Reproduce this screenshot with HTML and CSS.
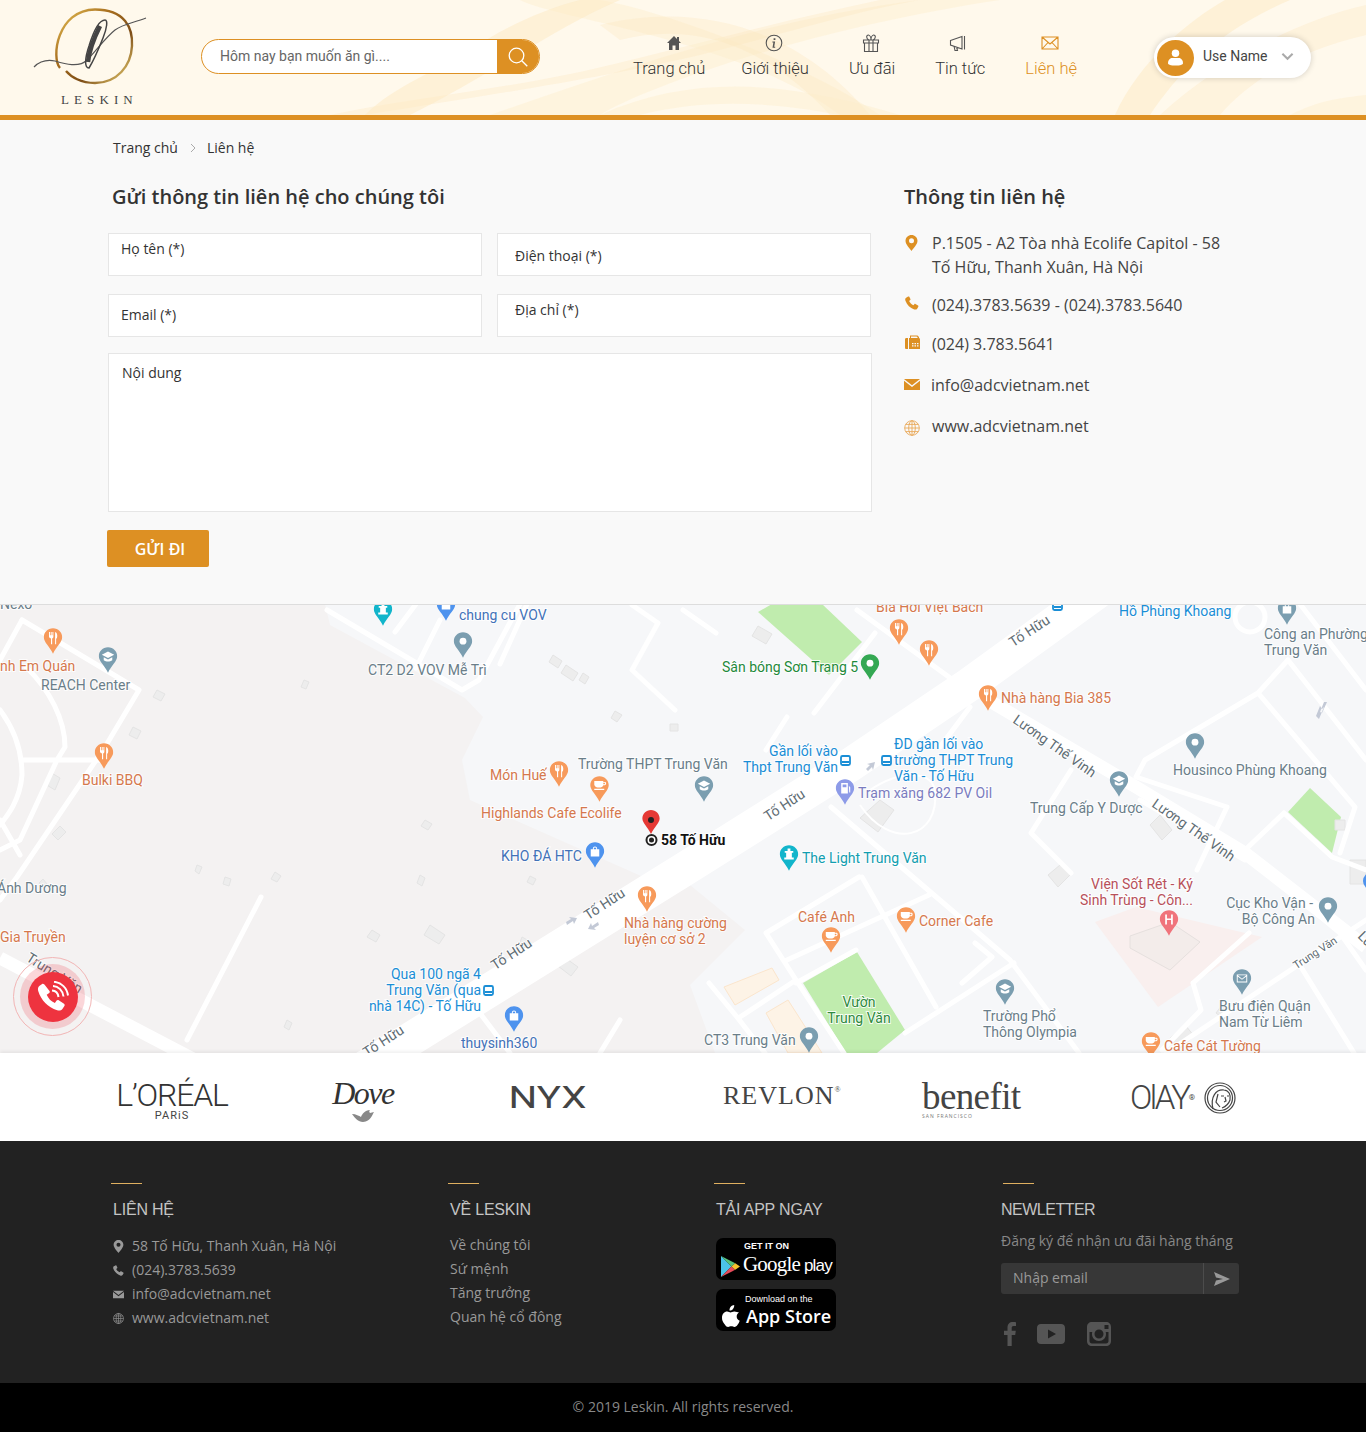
FILE: index.html
```html
<!DOCTYPE html>
<html lang="vi">
<head>
<meta charset="utf-8">
<title>Leskin - Liên hệ</title>
<link rel="stylesheet" href="styles.css">
</head>
<body>
<svg class="sprite" aria-hidden="true">
  <defs>
    <linearGradient id="gold" x1="0" y1="0" x2="1" y2="1">
      <stop offset="0" stop-color="#e9c65a"/><stop offset=".35" stop-color="#a9701f"/><stop offset=".65" stop-color="#7d4d16"/><stop offset="1" stop-color="#f0d878"/>
    </linearGradient>
    <symbol id="i-pin" viewBox="0 0 12 16"><path d="M6 0C2.7 0 0 2.6 0 5.8 0 9.6 4.6 14 6 16c1.400-2 6-6.400 6-10.200C12 2.600 9.300 0 6 0zm0 8.300A2.500 2.500 0 1 1 6 3.300a2.500 2.500 0 0 1 0 5z"/></symbol>
    <symbol id="i-phone" viewBox="0 0 16 16"><path d="M3.600.6 1.300 1.900C.2 2.600 0 4 .5 5.300c1.900 4.900 5.300 8.300 10 10 1.300.5 2.700.3 3.400-.8l1.300-2.300c.3-.5.2-1-.3-1.300l-3-1.800c-.4-.2-.9-.2-1.200.2l-1.100 1.300c-2.200-.9-3.900-2.700-4.900-4.900l1.300-1.100c.4-.3.4-.8.200-1.200L4.900.9C4.600.400 4.100.3 3.600.6z"/></symbol>
    <symbol id="i-mail" viewBox="0 0 16 11"><path d="M0 0h16L8 6.200zM0 1.800v9.200h16V1.800L8 8z"/></symbol>
    <symbol id="i-globe" viewBox="0 0 16 16"><g fill="none" stroke="currentColor" stroke-width=".9"><circle cx="8" cy="8" r="7.300"/><ellipse cx="8" cy="8" rx="3.300" ry="7.300"/><path d="M8 .7v14.600M.7 8h14.600M1.700 4.400h12.600M1.700 11.600h12.600"/></g></symbol>
    <symbol id="p" viewBox="0 0 20 27"><path d="M10 0C4.500 0 .3 4.300.3 9.600c0 5.200 6 9.400 9.700 17.400 3.700-8 9.700-12.200 9.700-17.400C19.700 4.300 15.500 0 10 0z"/></symbol>
    <symbol id="m-rest" viewBox="0 0 20 27"><path fill="#fff" d="M5.800 4h1v3.500h.8V4h1v3.500h.8V4h1v5c0 1-.6 1.500-1.300 1.800V17H7.900v-6.200C7.100 10.500 5.800 10 5.800 9zM12.200 4c1.500.3 2.300 2 2.300 4s-.6 3-1.200 3.200V17h-1.100z"/></symbol>
    <symbol id="m-cafe" viewBox="0 0 20 27"><path fill="#fff" d="M4.500 5h9.500v1h1.800c.8 0 1.200.7 1.200 1.500S16.600 9.500 15.500 9.500H14C13.600 11 12 12 9.500 12S5 11 4.500 9zM14 7v1.500h1.300c.3 0 .5-.3.500-.7s-.2-.8-.5-.8zM4.500 13.200h10.500v1.300H4.500z"/></symbol>
    <symbol id="m-school" viewBox="0 0 20 27"><path fill="#fff" d="M10 4.500 3.500 8 10 11.500 16.500 8zM5.500 10.500v3.300c1.200 1 2.900 1.400 4.500 1.400s3.300-.4 4.500-1.400v-3.300L10 13z"/></symbol>
    <symbol id="m-dot" viewBox="0 0 20 27"><circle cx="10" cy="9.500" r="3.600" fill="#fff"/></symbol>
    <symbol id="m-bag" viewBox="0 0 20 27"><path fill="#fff" d="M5.500 7.500h9v7.500h-9zM7.700 7.500V6.800a2.300 2.300 0 0 1 4.600 0v.7h-1V6.800a1.300 1.300 0 0 0-2.600 0v.7z"/></symbol>
    <symbol id="m-h" viewBox="0 0 20 27"><path fill="#fff" d="M6 4.500h1.800v4.200h4.400V4.500H14V15h-1.800v-4.600H7.800V15H6z"/></symbol>
    <symbol id="m-mail" viewBox="0 0 20 27"><path fill="#fff" d="M4.500 5.500h11v8.500h-11zm1 1L10 10l4.500-3.500zm0 1.200v5.300h9V7.700L10 11.200z"/></symbol>
    <symbol id="m-teal" viewBox="0 0 20 27"><path fill="#fff" d="M8.500 3.500h3v2.500h3v2h-1.500v5H15v2H5v-2h2V8H5.500V6h3zM9 9h2v2H9z"/></symbol>
    <symbol id="m-fuel" viewBox="0 0 20 27"><path fill="#fff" d="M6 4h7v11H6zm1.500 1.500v3h4v-3zM14 7l1.500 1.500V14h-1z"/></symbol>
  </defs>
</svg>

<header class="site-header">
  <svg class="swoosh" viewBox="0 0 1366 115" preserveAspectRatio="none" aria-hidden="true">
    <path class="sw1" d="M490 115C620 70 760 20 920 0L1000 0C800 30 640 90 600 115z"/>
    <path class="sw2" d="M365 115C520 90 600 78 700 55 780 35 860 10 920 0H880C760 25 640 60 560 76 480 92 400 100 330 115z"/>
    <path class="sw1" d="M520 0C560 20 740 40 840 115H880C800 60 660 10 600 0z"/>
    <path class="sw2" d="M620 40C700 20 770 50 830 115H870C800 30 700 0 600 25z"/>
    <path class="sw1" d="M600 115C700 70 800 85 900 115H840C760 100 700 100 640 115z"/>
    <path class="sw3" d="M1115 115C1140 60 1190 20 1225 0H1290C1220 30 1180 70 1150 115z"/>
    <path class="sw2" d="M1160 115C1220 60 1300 20 1366 5V35C1300 50 1250 80 1220 115z"/>
    <path class="sw1" d="M1290 115C1320 100 1340 98 1366 95V115z"/>
    <path class="sw3" d="M365 115C395 85 440 70 470 50 500 30 540 10 580 0H620C560 25 490 75 410 115z"/>
  </svg>
  <div class="brand-logo">
    <svg class="logo-art" viewBox="0 0 124 82" aria-hidden="true">
      <path class="logo-ring" d="M27 60C18 50 24 2 62 1.500 92 1.500 100 20 99 38 98 58 84 75 62 75 48 75 38 69 33 63"/>
      <path class="logo-flourish" d="M1 59C6 54 12 51 22 53 32 56 46 60 54 52 63 43 72 30 82 22 90 16 100 15 113 10"/>
      <path class="logo-l" d="M56 60C51 60 52 50 56 38 60 25 66 12 72 12 75 12 74 20 70 30 66 40 61 52 56 60z"/>
      <path class="logo-l-in" d="M55 54C56 44 61 30 67 18"/>
    </svg>
    <span class="logo-name">LESKIN</span>
  </div>
  <form class="search">
    <input class="search-input" type="text" placeholder="Hôm nay bạn muốn ăn gì....">
    <button class="search-btn" type="button" aria-label="Tìm">
      <svg class="search-icon" viewBox="0 0 20 20"><circle cx="8.500" cy="8.500" r="7.300"/><path d="M13.800 13.800 19.300 19.300"/></svg>
    </button>
  </form>
  <nav class="nav">
    <a class="nav-item">
      <svg class="nav-icon ni-home" viewBox="0 0 16 16"><path class="solid" d="M8 1 1 8h2v7h3.500v-4.500h3V15H13V8h2l-2-2V2h-2v2z"/></svg>
      <span>Trang chủ</span>
    </a>
    <a class="nav-item">
      <svg class="nav-icon ni-info" viewBox="0 0 18 18"><circle class="line" cx="9" cy="9" r="7.800"/><path class="solid" d="M8.600 4.200h1.800v1.700H8.600zM7.400 7.500h2.700L9.200 12.800h1v1H7.500l.9-5.300h-1z"/></svg>
      <span>Giới thiệu</span>
    </a>
    <a class="nav-item">
      <svg class="nav-icon ni-info" viewBox="0 0 18 18"><path class="line" d="M1.500 6h15v3h-15zM2.500 9h13v8.500h-13zM7 6v11.500M11 6v11.500M7 6C4 5 4 .8 6.500 1 8 1.200 9 4 9 6c0-2 1-4.800 2.500-5C14 .8 14 5 11 6"/></svg>
      <span>Ưu đãi</span>
    </a>
    <a class="nav-item">
      <svg class="nav-icon ni-mega" viewBox="0 0 18 18"><path class="line" d="M1.500 6.500 13 2.500v12.500L1.500 11zM15.500 2v13.500M5 12l1 4.500h2.500L7.500 13"/></svg>
      <span>Tin tức</span>
    </a>
    <a class="nav-item nav-active">
      <svg class="nav-icon ni-mail" viewBox="0 0 18 18"><path class="line" d="M1 3h16v12H1zM1 3l8 7 8-7M1 15l6-6.500M17 15l-6-6.500"/></svg>
      <span>Liên hệ</span>
    </a>
  </nav>
  <div class="user-pill">
    <span class="avatar">
      <svg class="avatar-icon" viewBox="0 0 16 18"><circle cx="8" cy="4.500" r="4"/><path d="M0 15c0-4 3-5.500 4-5.500h8c1 0 4 1.500 4 5.500 0 1.500-3 2.500-8 2.500S0 16.500 0 15z"/></svg>
    </span>
    <span class="user-name">Use Name</span>
    <svg class="chev" viewBox="0 0 14 9"><path d="M1.500 1.500 7 7l5.500-5.500"/></svg>
  </div>
</header>

<main class="main">
  <div class="crumbs"><a>Trang chủ</a><svg class="crumb-sep" viewBox="0 0 6 10"><path d="M1 1l4 4-4 4"/></svg><a>Liên hệ</a></div>
  <div class="contact-grid">
    <section class="form-col">
      <h2 class="title form-title">Gửi thông tin liên hệ cho chúng tôi</h2>
      <form class="form">
        <input class="field f-up" type="text" placeholder="Họ tên (*)">
        <input class="field f-down" type="text" placeholder="Điện thoại (*)">
        <input class="field" type="text" placeholder="Email (*)">
        <input class="field f-up f-wide" type="text" placeholder="Địa chỉ (*)">
        <textarea class="area" placeholder="Nội dung"></textarea>
      </form>
      <button class="send" type="button">GỬI ĐI</button>
    </section>
    <section class="info-col">
      <h2 class="title">Thông tin liên hệ</h2>
      <ul class="info">
        <li class="info-row r-addr"><svg class="info-ic ic-pin"><use href="#i-pin"/></svg><span>P.1505 - A2 Tòa nhà Ecolife Capitol - 58 Tố Hữu, Thanh Xuân, Hà Nội</span></li>
        <li class="info-row r-tel"><svg class="info-ic ic-phone"><use href="#i-phone"/></svg><span>(024).3783.5639 - (024).3783.5640</span></li>
        <li class="info-row r-fax"><svg class="info-ic ic-fax" viewBox="0 0 15 15"><path d="M0 4.500C0 3.500.5 3 1.500 3H3v11H1.500C.5 14 0 13.500 0 12.500zM4 3h1V.5h7.500L14 2v1h-.3C14.500 3 15 3.500 15 4.500V14H4zm2 0h6.500V2l-1-.5H6zm1 5v1.200h1.500V8zm2.500 0v1.200H11V8zM12 8v1.200h1.500V8zM7 10.300v1.200h1.500v-1.200zm2.500 0v1.200H11v-1.200zm2.500 0v1.200h1.500v-1.200z"/></svg><span>(024) 3.783.5641</span></li>
        <li class="info-row r-mail"><svg class="info-ic ic-mail"><use href="#i-mail"/></svg><span>info@adcvietnam.net</span></li>
        <li class="info-row r-web"><svg class="info-ic ic-globe"><use href="#i-globe"/></svg><span>www.adcvietnam.net</span></li>
      </ul>
    </section>
  </div>
</main>

<section class="map">
  <svg class="map-svg" viewBox="0 605 1366 448" aria-label="Bản đồ">
    <rect class="m-bg" x="0" y="604" width="1366" height="449"/>
    <path class="m-grey" d="M0 604H325L330 625 465 698 483 717 462 760 470 800 650 880 370 1053H0z"/>
    <path class="m-grey" d="M405 1053 690 885 745 930 690 985 715 1053z"/>
    <path class="m-green" d="M758 612 772 604H822L862 642 829 675z"/>
    <path class="m-green" d="M857 952 905 1030 877 1053H846L803 983z"/>
    <path class="m-green" d="M1310 788 1341 817 1332 853 1288 812z"/>
    <path class="m-pink" d="M1136 907 1262 937 1158 1007 1095 922z"/>
    <path class="m-tan" d="M724 987 772 968 779 980 735 1005z"/>
    <path class="m-tan" d="M766 1013 788 1000 822 1053H788z"/>
    <g class="m-block">
      <path d="M758 626l14 8-6 10-14-8zM553 655l9 6-4 7-9-6zM566 665l12 8-5 8-12-8zM583 673l6 4-4 7-6-4zM615 711l7 4-5 7-6-4zM670 724h8v7h-8zM304 680l5 2-3 7-5-2zM157 690l8 4-4 7-8-4zM133 727l8 4-4 8-8-4zM60 778l-5 12-10-6 5-12zM60 826l6 6-8 8-6-6zM425 820l7 4-4 6-7-4zM420 875l5 3-3 8-5-3zM275 872l6 4-4 6-6-3zM197 865l5 2-3 7-4-3zM225 877l6 2-2 7-6-2zM372 930l8 5-4 7-9-5zM430 925l15 10-6 9-15-9zM522 937l9 5-3 7-9-4zM564 957l14 10-7 9-13-10zM530 876l6 3-3 6-6-3zM287 1020l5 3-3 7-5-3zM43 879l4 5-4 4-4-5zM1160 815l12 15-10 10-12-15zM1335 820h10v10h-10zM1222 1005l8 6-6 8-8-6zM1350 860h16v24h-16zM880 800l14 10-16 22-18-14zM1060 865l10 10-12 12-10-12zM1170 1038l16-12 8 10-16 14z"/>
    </g>
    <path class="m-bld" d="M1130 936l40-14 30 20-30 28-40-22z"/>
    <g class="m-road">
      <path d="M22 620 139 690 105 747 17 877 0 900"/>
      <path d="M22 620 0 660M26 667C50 690 65 720 65 747L57 760 20 840 0 850M0 710C15 730 22 750 22 775 20 800 8 815 0 825M22 760H105M20 855 0 820"/>
      <path d="M261 897 187 1040"/>
      <path d="M327 610 462 690 479 680 520 604M395 632 416 604M416 668 440 620M500 664 527 604"/>
      <path d="M632 605 658 623 632 670 675 710"/>
      <path d="M683 610 716 633M857 610 953 680M875 633 814 713M787 717 766 750M970 707 940 747"/>
      <path d="M1071 770 1031 833 1071 873M1197 870 1227 807 1136 777 1145 760 1258 693 1288 660 1366 760M1300 604 1366 690"/>
      <path d="M1258 693 1355 807 1340 853M1284 813 1245 850M1284 813 1332 857 1366 870"/>
      <path d="M831 807 1010 960 1079 1053M862 877 936 1007M766 933 859 877M766 933 796 980 844 1053M929 895 787 960M796 983 856 950M905 1033 1014 963M962 983 992 957 975 943M709 983 737 1017 765 1053M740 1017 796 980"/>
      <path d="M1193 983 1249 933M1193 983 1201 1010 1162 1050M1354 1053 1301 967M1166 1053 1366 920M1245 853 1340 933 1366 970"/>
      <path d="M470 1000 510 1053M600 1053 620 1020"/>
      <circle cx="1250" cy="617" r="15"/>
      <path d="M1140 800 1245 860"/>
    </g>
    <path class="m-main" d="M340 1083 683 870 850 765 970 684 1100 590"/>
    <path class="m-mid" d="M0 958 195 1060"/>
    <path class="m-mid" d="M988 700 1136 787 1245 853 1366 947"/>
    <path class="m-thin" d="M860 805C890 850 940 840 935 790 930 770 900 770 870 790"/>

    <g class="t-road">
      <text transform="translate(607 908) rotate(-33)" text-anchor="middle">Tố Hữu</text>
      <text transform="translate(514 958) rotate(-33)" text-anchor="middle">Tố Hữu</text>
      <text transform="translate(386 1045) rotate(-33)" text-anchor="middle">Tố Hữu</text>
      <text transform="translate(787 809) rotate(-33)" text-anchor="middle">Tố Hữu</text>
      <text transform="translate(1032 635) rotate(-33)" text-anchor="middle">Tố Hữu</text>
      <text transform="translate(1052 750) rotate(35)" text-anchor="middle">Lương Thế Vinh</text>
      <text transform="translate(1191 834) rotate(35)" text-anchor="middle">Lương Thế Vinh</text>
      <text transform="translate(52 977) rotate(32)" text-anchor="middle">Trung Văn</text>
      <text transform="translate(1357 937) rotate(45)">Lu</text>
      <text class="t-small" transform="translate(1317 956) rotate(-33)" text-anchor="middle">Trung Văn</text>
    </g>

    <g class="t-or">
      <text x="0" y="671">nh Em Quán</text>
      <text x="82" y="785">Bulki BBQ</text>
      <text x="0" y="942">Gia Truyền</text>
      <text x="490" y="780">Món Huế</text>
      <text x="481" y="818">Highlands Cafe Ecolife</text>
      <text x="624" y="928">Nhà hàng cường</text>
      <text x="624" y="944">luyện cơ sở 2</text>
      <text x="876" y="612">Bia Hơi Việt Bách</text>
      <text x="1001" y="703">Nhà hàng Bia 385</text>
      <text x="798" y="922">Café Anh</text>
      <text x="919" y="926">Corner Cafe</text>
      <text x="1164" y="1051">Cafe Cát Tường</text>
    </g>
    <g class="t-sl">
      <text x="0" y="609">Nexo</text>
      <text x="41" y="690">REACH Center</text>
      <text x="-3" y="893">Ánh Dương</text>
      <text x="368" y="675">CT2 D2 VOV Mễ Trì</text>
      <text x="578" y="769">Trường THPT Trung Văn</text>
      <text x="1264" y="639">Công an Phường</text>
      <text x="1264" y="655">Trung Văn</text>
      <text x="1173" y="775">Housinco Phùng Khoang</text>
      <text x="1030" y="813">Trung Cấp Y Dược</text>
      <text x="1313" y="908" text-anchor="end">Cục Kho Vận -</text>
      <text x="1315" y="924" text-anchor="end">Bộ Công An</text>
      <text x="983" y="1021">Trường Phổ</text>
      <text x="983" y="1037">Thông Olympia</text>
      <text x="704" y="1045">CT3 Trung Văn</text>
      <text x="1219" y="1011">Bưu điện Quận</text>
      <text x="1219" y="1027">Nam Từ Liêm</text>
    </g>
    <g class="t-bl">
      <text x="459" y="620">chung cu VOV</text>
      <text x="501" y="861">KHO ĐÁ HTC</text>
      <text x="461" y="1048">thuysinh360</text>
    </g>
    <g class="t-tr">
      <text x="1119" y="616">Hồ Phùng Khoang</text>
      <text x="838" y="756" text-anchor="end">Gần lối vào</text>
      <text x="838" y="772" text-anchor="end">Thpt Trung Văn</text>
      <text x="894" y="749">ĐD gần lối vào</text>
      <text x="894" y="765">trường THPT Trung</text>
      <text x="894" y="781">Văn - Tố Hữu</text>
      <text x="481" y="979" text-anchor="end">Qua 100 ngã 4</text>
      <text x="481" y="995" text-anchor="end">Trung Văn (qua</text>
      <text x="481" y="1011" text-anchor="end">nhà 14C) - Tố Hữu</text>
    </g>
    <text class="t-gr" x="722" y="672">Sân bóng Sơn Trang 5</text>
    <g class="t-pk"><text x="859" y="1007" text-anchor="middle">Vườn</text><text x="859" y="1023" text-anchor="middle">Trung Văn</text></g>
    <text class="t-pu" x="858" y="798">Trạm xăng 682 PV Oil</text>
    <text class="t-te" x="802" y="863">The Light Trung Văn</text>
    <g class="t-re"><text x="1193" y="889" text-anchor="end">Viện Sốt Rét - Ký</text><text x="1193" y="905" text-anchor="end">Sinh Trùng - Côn...</text></g>
    <text class="t-bk" x="661" y="845">58 Tố Hữu</text>

    <g class="c-or">
      <use href="#p" x="43.500" y="628" width="19" height="26"/><use href="#p" x="94.500" y="743" width="19" height="26"/>
      <use href="#p" x="549.500" y="761" width="19" height="26"/><use href="#p" x="637.500" y="886" width="19" height="26"/>
      <use href="#p" x="889.500" y="619" width="19" height="26"/><use href="#p" x="919.500" y="640" width="19" height="26"/>
      <use href="#p" x="978.500" y="685" width="19" height="26"/><use href="#p" x="590" y="776" width="19" height="26"/>
      <use href="#p" x="896.500" y="907" width="19" height="26"/><use href="#p" x="821.500" y="927" width="19" height="26"/>
      <use href="#p" x="1141.500" y="1032" width="19" height="26"/>
    </g>
    <g>
      <use href="#m-rest" x="43.500" y="628" width="19" height="26"/><use href="#m-rest" x="94.500" y="743" width="19" height="26"/>
      <use href="#m-rest" x="549.500" y="761" width="19" height="26"/><use href="#m-rest" x="637.500" y="886" width="19" height="26"/>
      <use href="#m-rest" x="889.500" y="619" width="19" height="26"/><use href="#m-rest" x="919.500" y="640" width="19" height="26"/>
      <use href="#m-rest" x="978.500" y="685" width="19" height="26"/><use href="#m-cafe" x="590" y="776" width="19" height="26"/>
      <use href="#m-cafe" x="896.500" y="907" width="19" height="26"/><use href="#m-cafe" x="821.500" y="927" width="19" height="26"/>
      <use href="#m-cafe" x="1141.500" y="1032" width="19" height="26"/>
    </g>
    <g class="c-sl">
      <use href="#p" x="98.500" y="647" width="19" height="26"/><use href="#p" x="453.500" y="632" width="19" height="26"/>
      <use href="#p" x="694.500" y="776" width="19" height="26"/><use href="#p" x="1185.500" y="733" width="19" height="26"/>
      <use href="#p" x="1109.500" y="771" width="19" height="26"/><use href="#p" x="995.500" y="979" width="19" height="26"/>
      <use href="#p" x="799.500" y="1027" width="19" height="26"/><use href="#p" x="1318.500" y="897" width="19" height="26"/>
      <use href="#p" x="1232.500" y="969" width="19" height="26"/><use href="#p" x="1277.500" y="599" width="19" height="26"/>
    </g>
    <g>
      <use href="#m-school" x="98.500" y="647" width="19" height="26"/><use href="#m-dot" x="453.500" y="632" width="19" height="26"/>
      <use href="#m-school" x="694.500" y="776" width="19" height="26"/><use href="#m-dot" x="1185.500" y="733" width="19" height="26"/>
      <use href="#m-school" x="1109.500" y="771" width="19" height="26"/><use href="#m-school" x="995.500" y="979" width="19" height="26"/>
      <use href="#m-dot" x="799.500" y="1027" width="19" height="26"/><use href="#m-dot" x="1318.500" y="897" width="19" height="26"/>
      <use href="#m-mail" x="1232.500" y="969" width="19" height="26"/><use href="#m-bag" x="1277.500" y="599" width="19" height="26"/>
    </g>
    <g class="c-bl">
      <use href="#p" x="436.500" y="595" width="19" height="26"/><use href="#p" x="585.500" y="842" width="19" height="26"/>
      <use href="#p" x="504.500" y="1006" width="19" height="26"/><circle cx="1372" cy="881" r="9"/>
    </g>
    <g>
      <use href="#m-bag" x="436.500" y="595" width="19" height="26"/><use href="#m-bag" x="585.500" y="842" width="19" height="26"/>
      <use href="#m-bag" x="504.500" y="1006" width="19" height="26"/>
    </g>
    <use class="c-te" href="#p" x="373.500" y="600" width="19" height="26"/><use href="#m-teal" x="373.500" y="600" width="19" height="26"/>
    <use class="c-te" href="#p" x="779.500" y="845" width="19" height="26"/><use href="#m-teal" x="779.500" y="845" width="19" height="26"/>
    <use class="c-gr" href="#p" x="860.500" y="654" width="19" height="26"/><use href="#m-dot" x="860.500" y="654" width="19" height="26"/>
    <use class="c-pu" href="#p" x="835.500" y="779" width="19" height="26"/><use href="#m-fuel" x="835.500" y="779" width="19" height="26"/>
    <use class="c-pk" href="#p" x="1159.500" y="910" width="19" height="26"/><use href="#m-h" x="1159.500" y="910" width="19" height="26"/>

    <g class="bus">
      <rect x="841" y="756" width="9" height="9" rx="1.500"/><rect x="882" y="756" width="9" height="9" rx="1.500"/><rect x="484" y="986" width="9" height="9" rx="1.500"/><rect x="1053" y="601" width="9" height="9" rx="1.500"/>
      <path class="bus-in" d="M842 761h7v2h-7zM883 761h7v2h-7zM485 991h7v2h-7zM1054 606h7v2h-7z"/>
    </g>
    <g class="arrow">
      <path d="M866 769l4-4-3-1 8-2-2 8-1-3-4 4zM567 925l6-4 1 3 3-6-8-1 2 2-5 3zM598 922l-6 4-1-3-3 6 8 1-2-2 5-3zM1316 716l4-10 2 3 2-2-5 12zM1324 702l-4 10 2 1 5-11z"/>
    </g>
    <use class="c-red" href="#p" x="642" y="810" width="18" height="24"/>
    <circle class="c-dark" cx="651" cy="820" r="3"/>
    <circle class="target" cx="651.500" cy="840" r="5"/>
    <circle class="c-dark" cx="651.500" cy="840" r="2.500"/>
  </svg>
  <div class="call">
    <span class="call-ring"></span>
    <span class="call-btn">
      <svg class="call-icon" viewBox="0 0 32 32"><path class="ph" d="M5.500 2.800 2.600 4.800C1 6 .6 8 1.200 10c3 9.500 9.500 16 19 19.300 2 .7 4 .2 5.200-1.400l2-2.900c.5-.7.300-1.700-.4-2.200l-5.300-3.600c-.7-.5-1.600-.3-2.100.3L17.900 22c-3.900-1.600-6.600-4.500-8.200-8.200l2.500-1.700c.6-.5.800-1.400.3-2.100L8 4.200c-.5-.8-1.700-1.900-2.500-1.400z"/><path class="arc" d="M15 9.500c3.500.2 6 2.800 6.500 6.500M16 5c5.500.3 9.800 4.600 10.500 10.500M17 .8C24.500 1.500 30 7 31 14.500"/></svg>
    </span>
  </div>
</section>

<section class="brands">
  <div class="b-loreal"><span class="loreal">L’ORÉAL</span><span class="paris">PARiS</span></div>
  <div class="b-dove"><span class="dove">Dove</span><svg class="dove-bird" viewBox="0 0 22 12"><path d="M0 4c4 0 7 2 9 3 1-3 4-7 9-7-1 1-1 2 0 3l4-1c-2 3-3 9-11 10C6 12 3 8 0 4z"/></svg></div>
  <div class="b-nyx">NYX</div>
  <div class="b-revlon">REVLON<sup class="reg">®</sup></div>
  <div class="b-benefit"><span class="benefit">benefit</span><span class="sanfran">SAN FRANCISCO</span></div>
  <div class="b-olay"><span class="olay">OlAY</span><sup class="reg">®</sup><svg class="olay-face" viewBox="0 0 32 32"><circle cx="16" cy="16" r="15"/><circle cx="16" cy="16" r="12.500"/><path d="M9 27C6 15 12 7 20 8c5 .5 7 5 6 10-1 3-3 6-8 8M14 12l-2 8 4 5M17 14h3M23 14h2M21 15l1 4-2 1"/></svg></div>
</section>

<footer class="footer">
  <div class="foot-grid">
    <div class="foot-col">
      <span class="rule"></span>
      <h3 class="foot-h">LIÊN HỆ</h3>
      <ul class="foot-list">
        <li><svg class="foot-ic"><use href="#i-pin"/></svg>58 Tố Hữu, Thanh Xuân, Hà Nội</li>
        <li><svg class="foot-ic"><use href="#i-phone"/></svg>(024).3783.5639</li>
        <li><svg class="foot-ic"><use href="#i-mail"/></svg>info@adcvietnam.net</li>
        <li><svg class="foot-ic"><use href="#i-globe"/></svg>www.adcvietnam.net</li>
      </ul>
    </div>
    <div class="foot-col">
      <span class="rule"></span>
      <h3 class="foot-h">VỀ LESKIN</h3>
      <ul class="foot-links">
        <li>Về chúng tôi</li><li>Sứ mệnh</li><li>Tăng trưởng</li><li>Quan hệ cổ đông</li>
      </ul>
    </div>
    <div class="foot-col">
      <span class="rule"></span>
      <h3 class="foot-h">TẢI APP NGAY</h3>
      <a class="badge badge-g">
        <svg class="play" viewBox="0 0 20 22"><path class="pl-a" d="M0 0 11 11 0 22z"/><path class="pl-b" d="M0 0 15 7.500 11 11z"/><path class="pl-c" d="M0 22 15 14.500 11 11z"/><path class="pl-d" d="M15 7.500 20 11 15 14.500 11 11z"/></svg>
        <span class="g-top">GET IT ON</span>
        <span class="g-main">Google<span class="g-play"> play</span></span>
      </a>
      <a class="badge badge-a">
        <svg class="apple" viewBox="0 0 18 22"><path d="M12.200 0c.2 1.500-.4 2.900-1.200 3.900-.9 1-2.200 1.800-3.500 1.700-.2-1.400.5-2.900 1.200-3.800C9.600.8 11 .1 12.200 0zM17 7.500c-1.500 1-2.300 2.300-2.300 4 0 2 1.100 3.400 3 4.200-.5 1.500-1.200 2.900-2.100 4.100-.9 1.300-1.900 2.200-3.100 2.200s-1.700-.7-3.200-.7-2 .7-3.200.7-2.200-1-3.100-2.300C.6 17.300 0 14.900 0 12.800 0 9 2.400 6.600 5.200 6.600c1.300 0 2.500.9 3.300.9s2.100-1 3.700-1c1.900 0 3.700.9 4.800 1z"/></svg>
        <span class="a-top">Download on the</span>
        <span class="a-main">App Store</span>
      </a>
    </div>
    <div class="foot-col col-news">
      <span class="rule rule-news"></span>
      <h3 class="foot-h foot-h-news">NEWLETTER</h3>
      <p class="news-p">Đăng ký để nhận ưu đãi hàng tháng</p>
      <form class="news-form">
        <input class="news-input" type="text" placeholder="Nhập email">
        <button class="news-btn" type="button" aria-label="Gửi"><svg class="news-send" viewBox="0 0 16 14"><path d="M0 0 16 7 0 14 2 8.500 9 7 2 5.500z"/></svg></button>
      </form>
      <div class="social">
        <svg class="soc soc-f" viewBox="0 0 12 24"><path d="M3.500 24V13H0V8.800h3.500V5.700C3.500 2 5.600 0 8.900 0c1.500 0 2.600.1 3.100.2V4h-2.200C8 4 7.700 4.900 7.700 6.100v2.700h4.100L11.200 13H7.700v11z"/></svg>
        <svg class="soc soc-y" viewBox="0 0 28 20"><path d="M4 0h20c2.500 0 4 1.500 4 4v12c0 2.500-1.500 4-4 4H4c-2.500 0-4-1.500-4-4V4c0-2.500 1.500-4 4-4zm7 5.500v9l8-4.500z"/></svg>
        <svg class="soc soc-i" viewBox="0 0 24 24"><path d="M5 0h14c3 0 5 2 5 5v14c0 3-2 5-5 5H5c-3 0-5-2-5-5V5c0-3 2-5 5-5zm12.500 3v4h4V3zM2.500 10v9c0 1.500 1 2.500 2.500 2.500h14c1.500 0 2.500-1 2.500-2.500v-9h-2.800c.2.600.3 1.300.3 2 0 4-3 7-7 7s-7-3-7-7c0-.7.1-1.400.3-2zM12 7.500a4.500 4.500 0 1 0 0 9 4.500 4.500 0 0 0 0-9z"/></svg>
      </div>
    </div>
  </div>
</footer>
<div class="copyright">© 2019 Leskin. All rights reserved.</div>
</body>
</html>
```

FILE: styles.css
```css
* { box-sizing: border-box; }
html, body { margin: 0; padding: 0; }
body { font-family: "Open Sans", "Liberation Sans", sans-serif; font-size: 14px; color: #333; background: #f9f9f9; width: 1366px; }
ul { list-style: none; margin: 0; padding: 0; }
h2, h3, p { margin: 0; }
input, textarea, button { font-family: inherit; outline: none; }
.sprite { position: absolute; width: 0; height: 0; }

/* header */
.site-header { position: relative; height: 120px; background: #fff9ec; border-bottom: 5px solid #dd9023; display: flex; align-items: flex-start; overflow: hidden; }
.swoosh { position: absolute; left: 0; top: 0; width: 1366px; height: 115px; }
.sw1 { fill: #fdeecb; opacity: .4; }
.sw2 { fill: #fce6b8; opacity: .3; }
.sw3 { fill: #fdeac2; opacity: .5; }
.brand-logo { position: relative; width: 200px; padding: 8px 0 0 33px; flex: none; display: flex; flex-direction: column; }
.logo-art { width: 124px; height: 82px; overflow: visible; }
.logo-ring { fill: none; stroke: url(#gold); stroke-width: 2.400; }
.logo-flourish { fill: none; stroke: #555; stroke-width: 1.200; }
.logo-l { fill: none; stroke: #444; stroke-width: 1.500; }
.logo-l-in { fill: none; stroke: #444; stroke-width: 4.500; }
.logo-name { font-family: "Liberation Serif", serif; font-size: 13px; letter-spacing: 5.100px; color: #444; margin: 2px 0 0 28px; line-height: 15px; }
.search { position: relative; margin: 39px 0 0 1px; width: 339px; height: 35px; display: flex; background: #fff; border: 1px solid #dd9023; border-radius: 18px; overflow: hidden; flex: none; }
.search-input { flex: 1; min-width: 0; border: 0; padding: 0 10px 2px 18px; font-family: Roboto, sans-serif; font-size: 14px; background: transparent; }
.search-input::placeholder { color: #666; opacity: 1; }
.search-btn { width: 42px; background: #dd9023; border: 0; padding: 0; display: flex; align-items: center; justify-content: center; }
.search-icon { width: 20px; height: 20px; fill: none; stroke: #fff; stroke-width: 1.300; }
.nav { position: relative; display: flex; margin: 34px 0 0 93px; gap: 36px; flex: none; font-family: Roboto, sans-serif; font-size: 16.500px; font-weight: 300; }
.nav-item { display: flex; flex-direction: column; align-items: center; color: #333; gap: 6px; line-height: 22px; }
.nav-item:nth-child(n+3) { margin-left: 4px; }
.nav-icon { width: 18px; height: 18px; display: block; }
.ni-home { width: 16px; margin-left: 10px; }
.ni-info { margin-left: -3px; }
.ni-mega { margin-left: -5px; }
.ni-mail { margin-left: -2px; }
.solid { fill: #555; }
.line { fill: none; stroke: #555; stroke-width: 1.100; }
.nav-active { color: #dd9023; }
.nav-active .line { stroke: #dd9023; }
.user-pill { position: relative; margin: 37px 0 0 77px; width: 157px; height: 41px; background: #fff; border-radius: 21px; box-shadow: 0 0 6px rgba(0,0,0,.18); display: flex; align-items: center; padding-left: 3px; flex: none; }
.avatar { width: 37px; height: 36px; border-radius: 50%; background: #dd9023; display: flex; align-items: center; justify-content: center; }
.avatar-icon { width: 15px; height: 17px; fill: #fff; }
.user-name { font-family: Roboto, sans-serif; font-size: 14px; color: #444; margin-left: 9px; padding-bottom: 3px; }
.chev { width: 13px; height: 9px; margin: 0 0 3px 13px; fill: none; stroke: #aaa; stroke-width: 2.200; }

/* main */
.main { height: 485px; padding: 17px 0 0 108px; background: #f9f9f9; border-bottom: 1px solid #ddd; }
.crumbs { display: flex; align-items: center; padding-left: 5px; height: 20px; color: #333; font-size: 14px; }
.crumb-sep { width: 6px; height: 10px; margin: 2px 11px 0 12px; fill: none; stroke: #aaa; stroke-width: 1; }
.contact-grid { display: grid; grid-template-columns: 764px 340px; column-gap: 32px; margin-top: 26px; }
.title { font-size: 20px; font-weight: 600; color: #333; line-height: 27px; height: 27px; }
.form-title { padding-left: 4px; }
.form { display: grid; grid-template-columns: 374px 374px; column-gap: 15px; row-gap: 18px; margin-top: 23px; }
.field { height: 43px; border: 1px solid #e6e6e6; background: #fff; padding: 0 12px 2px; font-size: 14px; width: 374px; }
.field::placeholder, .area::placeholder { color: #333; opacity: 1; }
.f-up { padding-bottom: 13px; }
.f-down { padding: 1px 0 0 17px; }
.f-wide { padding-left: 17px; }
.area { grid-column: 1 / 3; width: 764px; height: 159px; margin-top: -2px; border: 1px solid #e6e6e6; background: #fff; padding: 9px 13px; font-size: 14px; line-height: 19px; resize: none; display: block; }
.send { display: block; margin: 18px 0 0 -1px; width: 102px; height: 37px; background: #dd9023; color: #fff; border: 0; border-radius: 2px; font-size: 16px; font-weight: 600; padding: 0 0 0 4px; }
.info { margin-top: 21px; font-size: 16px; color: #444; line-height: 24px; }
.info-row { display: flex; align-items: flex-start; width: 330px; }
.info-row span { display: block; width: 295px; }
.r-tel { margin-top: 14px; }
.r-fax { margin-top: 15px; }
.r-mail { margin-top: 17px; }
.r-web { margin-top: 17px; }
.info-ic { flex: none; fill: #dd9023; color: #e9a95a; }
.ic-pin { width: 13px; height: 16px; margin: 4px 14px 0 1px; }
.ic-phone { width: 14px; height: 14px; margin: 3px 13px 0 1px; }
.ic-fax { width: 15px; height: 15px; margin: 3px 12px 0 1px; }
.ic-mail { width: 16px; height: 11px; margin: 6px 11px 0 0; }
.ic-globe { width: 16px; height: 16px; margin: 6px 12px 0 0; }

/* map */
.map { position: relative; height: 448px; overflow: hidden; }
.map-svg { display: block; width: 1366px; height: 448px; font-family: Roboto, sans-serif; font-size: 14px; }
.map-svg text { paint-order: stroke; stroke: rgba(255,255,255,.85); stroke-width: 2px; }
.m-bg { fill: #f6f7f9; }
.m-grey { fill: #f4f2f2; }
.m-green { fill: #c0ecae; }
.m-pink { fill: #f9efee; }
.m-tan { fill: #fdf3e6; stroke: #fbe5cc; stroke-width: 1; }
.m-block { fill: #ededed; stroke: #e4e4e4; stroke-width: 1; }
.m-bld { fill: #f3ecea; stroke: #e6e0de; stroke-width: 1; }
.m-road { fill: none; stroke: #fff; stroke-width: 5; stroke-linejoin: round; stroke-linecap: round; }
.m-main { fill: none; stroke: #fff; stroke-width: 34; }
.m-mid { fill: none; stroke: #fff; stroke-width: 13; }
.m-thin { fill: none; stroke: #fff; stroke-width: 2; }
.t-road { fill: #5f6d74; font-size: 14px; }
.t-small { font-size: 11px; }
.t-or { fill: #d5784d; }
.t-sl { fill: #6a7e89; }
.t-bl { fill: #4272b8; }
.t-tr { fill: #1a8ed6; }
.t-gr { fill: #1f8a3b; }
.t-pk { fill: #2f8a3f; }
.t-pu { fill: #7a7cc0; }
.t-te { fill: #129eb0; }
.t-re { fill: #b8505a; }
.t-bk { fill: #111; font-weight: 700; }
.c-or { fill: #f79a5b; }
.c-sl { fill: #7b9eb0; }
.c-bl { fill: #4e93ee; }
.c-te { fill: #12b5cb; }
.c-gr { fill: #34a853; }
.c-pu { fill: #8d9be8; }
.c-pk { fill: #f0737b; }
.c-red { fill: #e53935; }
.c-dark { fill: #222; }
.target { fill: #fff; stroke: #222; stroke-width: 2; }
.bus { fill: #fff; stroke: #1a8ed6; stroke-width: 1.800; }
.bus-in { fill: #1a8ed6; stroke: none; }
.arrow { fill: #c3c9d6; }
.call { position: absolute; left: 13px; top: 352px; width: 79px; height: 79px; border: 1px solid #f2b5b5; border-radius: 50%; display: flex; align-items: center; justify-content: center; }
.call-ring { position: absolute; left: 6px; top: 6px; width: 65px; height: 65px; border-radius: 50%; background: rgba(236,51,63,.2); }
.call-btn { position: relative; width: 50px; height: 50px; border-radius: 50%; background: #ee333f; display: flex; align-items: center; justify-content: center; }
.call-icon { width: 32px; height: 32px; }
.ph { fill: #fff; }
.arc { fill: none; stroke: #fff; stroke-width: 2; }

/* brands */
.brands { position: relative; height: 88px; background: #fff; box-shadow: 0 -2px 3px rgba(0,0,0,.06); display: flex; align-items: center; color: #444; }
.brands > div { flex: none; }
.b-loreal { margin-left: 115px; width: 114px; display: flex; flex-direction: column; align-items: center; font-family: Roboto, sans-serif; margin-top: 8px; }
.loreal { font-size: 32px; line-height: 30px; letter-spacing: -1.200px; font-weight: 300; white-space: nowrap; color: #333; }
.paris { font-size: 11px; line-height: 12px; letter-spacing: 1px; margin-top: 0; }
.b-dove { margin-left: 103px; width: 62px; display: flex; flex-direction: column; align-items: center; margin-top: 4px; }
.dove { font-family: "Liberation Serif", serif; font-style: italic; font-size: 32px; line-height: 32px; letter-spacing: -1.500px; color: #333; }
.dove-bird { width: 22px; height: 12px; fill: #888; margin-top: 1px; }
.b-nyx { margin-left: 113px; width: 81px; font-family: Roboto, sans-serif; font-size: 31px; letter-spacing: 0; line-height: 32px; font-weight: 400; text-align: center; color: #444; transform: scaleX(1.300); margin-top: 2px; }
.b-revlon { margin-left: 135px; width: 117px; font-family: "Liberation Serif", serif; font-size: 26px; line-height: 26px; letter-spacing: 1px; white-space: nowrap; margin-top: -2px; }
.reg { font-size: 8px; line-height: 0; vertical-align: 12px; letter-spacing: 0; }
.b-benefit { margin-left: 82px; width: 99px; display: flex; flex-direction: column; margin-top: 6px; }
.benefit { font-family: "Liberation Serif", serif; font-size: 37px; line-height: 32px; letter-spacing: -.6px; color: #444; }
.sanfran { font-size: 5px; line-height: 6px; letter-spacing: 1px; color: #777; white-space: nowrap; }
.b-olay { margin-left: 109px; width: 109px; display: flex; align-items: center; font-family: Roboto, sans-serif; margin-top: 2px; }
.olay { font-size: 33px; line-height: 34px; letter-spacing: -2.500px; font-weight: 300; }
.olay-face { width: 32px; height: 32px; margin-left: 9px; fill: none; stroke: #444; stroke-width: 1.200; }

/* footer */
.footer { height: 242px; background: #222; color: #999; padding: 42px 0 0 113px; }
.foot-grid { display: grid; grid-template-columns: 337px 266px 285px 260px; }
.rule { display: block; width: 31px; height: 1px; background: #e0b060; margin-left: -2px; }
.rule-news { margin-left: 2px; }
.foot-h { font-family: "Liberation Sans", sans-serif; font-size: 16px; font-weight: 400; color: #c4c4c4; line-height: 20px; margin-top: 16px; letter-spacing: -.2px; }
.foot-h-news { letter-spacing: -.5px; }
.foot-list { margin-top: 14px; line-height: 24px; font-size: 14px; color: #999; }
.foot-list li { display: flex; align-items: center; height: 24px; }
.foot-ic { width: 11px; height: 13px; fill: #999; color: #999; margin-right: 8px; flex: none; }
.foot-links { margin-top: 13px; line-height: 24px; font-size: 14px; color: #999; }
.badge { position: relative; display: block; width: 120px; height: 42px; background: #000; border-radius: 7px; color: #fff; margin-top: 18px; }
.badge-a { margin-top: 9px; }
.g-top { position: absolute; left: 28px; top: 2px; font-size: 9px; font-weight: 700; font-family: "Liberation Sans", sans-serif; line-height: 12px; }
.g-main { position: absolute; left: 27px; top: 14px; font-family: "Liberation Serif", serif; font-size: 21px; line-height: 24px; letter-spacing: -.8px; white-space: nowrap; }
.g-play { font-family: "Liberation Sans", sans-serif; font-size: 17px; }
.play { position: absolute; left: 5px; top: 18px; width: 19px; height: 21px; }
.pl-a { fill: #4bc3e8; } .pl-b { fill: #57c27a; } .pl-c { fill: #e64a5a; } .pl-d { fill: #f7c32e; }
.apple { position: absolute; left: 6px; top: 16px; width: 18px; height: 22px; fill: #fff; }
.a-top { position: absolute; left: 29px; top: 4px; font-size: 9px; line-height: 12px; white-space: nowrap; font-family: "Liberation Sans", sans-serif; }
.a-main { position: absolute; left: 30px; top: 15px; font-size: 18px; font-weight: 600; line-height: 24px; white-space: nowrap; }
.news-p { font-size: 14px; line-height: 20px; color: #888; margin-top: 11px; white-space: nowrap; }
.news-form { display: flex; width: 238px; height: 31px; margin-top: 12px; background: #373737; border-radius: 3px; }
.news-input { width: 203px; border: 0; border-right: 1px solid #4c4c4c; background: transparent; padding: 0 12px 2px; font-size: 14px; color: #999; }
.news-input::placeholder { color: #999; opacity: 1; }
.news-btn { flex: 1; border: 0; background: transparent; padding: 0; display: flex; align-items: center; justify-content: center; }
.news-send { width: 16px; height: 14px; fill: #999; }
.social { display: flex; align-items: center; margin-top: 28px; }
.soc { fill: #555; flex: none; }
.soc-f { width: 12px; height: 24px; margin-left: 3px; }
.soc-y { width: 28px; height: 20px; margin-left: 21px; }
.soc-i { width: 24px; height: 24px; margin-left: 22px; }
.copyright { height: 49px; background: #000; color: #888; text-align: center; font-size: 14px; line-height: 48px; }
```
